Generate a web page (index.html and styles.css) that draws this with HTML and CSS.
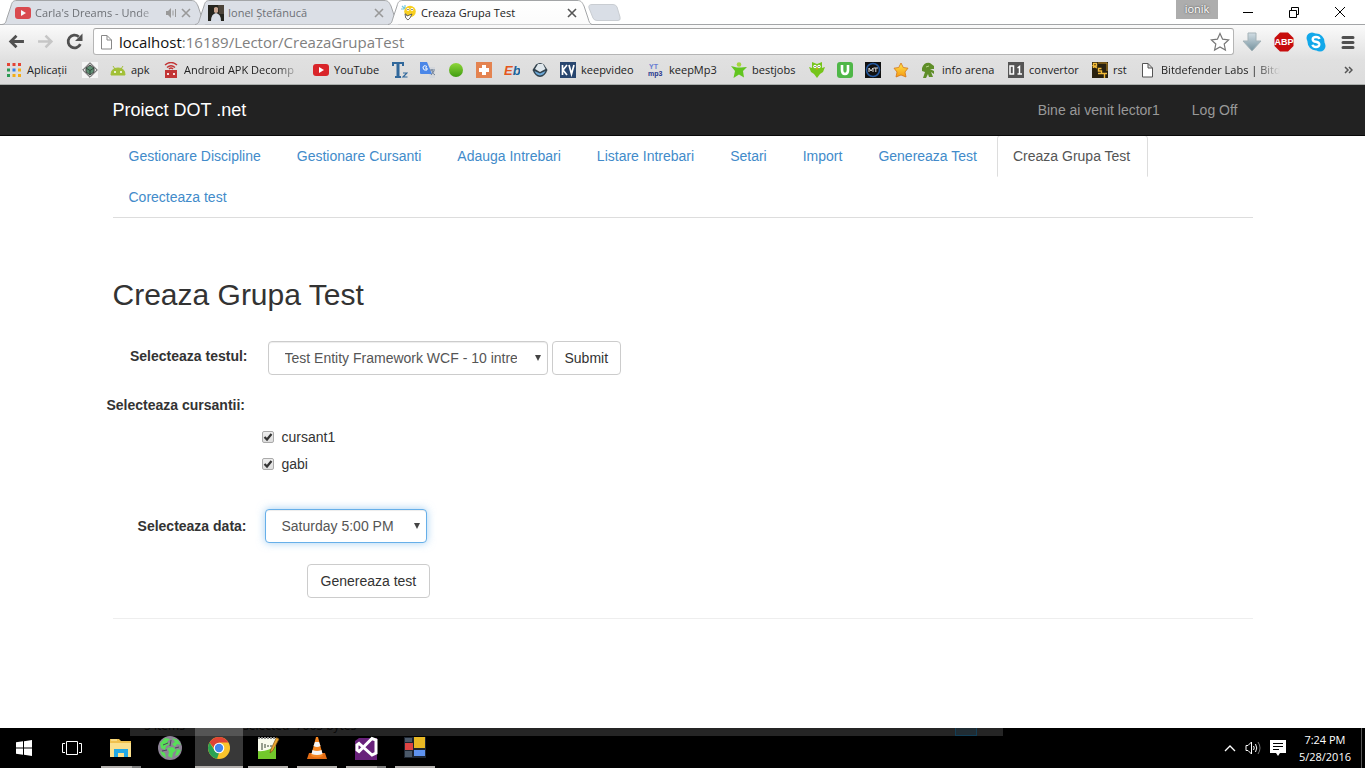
FILE: index.html
```html
<!DOCTYPE html>
<html lang="ro">
<head>
<meta charset="utf-8">
<title>Creaza Grupa Test</title>
<link rel="stylesheet" href="styles.css">
</head>
<body>
<svg class="defs" aria-hidden="true">
  <defs>
    <linearGradient id="activeFill" x1="0" y1="0" x2="0" y2="1"><stop offset="0" stop-color="#fff"/><stop offset="1" stop-color="#fbfbfb"/></linearGradient>
    <linearGradient id="gloss" x1="0" y1="0" x2="0" y2="1"><stop offset="0" stop-color="#d1dde4"/><stop offset="1" stop-color="#74919d"/></linearGradient>
    <linearGradient id="lime" x1="0" y1="0" x2="0" y2="1"><stop offset="0" stop-color="#8fd63a"/><stop offset="1" stop-color="#3f9c10"/></linearGradient>
    <linearGradient id="gold" x1="0" y1="0" x2="0" y2="1"><stop offset="0" stop-color="#ffe54a"/><stop offset="1" stop-color="#f59a12"/></linearGradient>
    <symbol id="tab" viewBox="0 0 204 25"><path d="M0 24.500C4 24 4 21 5 18L9 6C10 2 11 .5 15 .5H189C193 .5 194 2 196 6L200 18C201 22 202 24 204 24.500" stroke="#a3a5a7"/></symbol>
    <symbol id="close" viewBox="0 0 10 10"><path d="M1 1L9 9M9 1L1 9" stroke="currentColor" stroke-width="1.600"/></symbol>
    <symbol id="yt" viewBox="0 0 16 16"><rect y="2" width="16" height="12" rx="3" fill="#d9252a"/><path d="M6 5L11 8L6 11Z" fill="#fff"/></symbol>
    <symbol id="doc" viewBox="0 0 16 16"><path d="M2.500 1.500H8L12.500 6V15H2.500ZM8 1.500V6H12.500" fill="#fff" stroke="currentColor"/></symbol>
  </defs>
</svg>

<header class="browser">
  <div class="tabstrip">
    <div class="tab">
      <svg class="tab-shape" fill="#dbdfe6"><use href="#tab"/></svg>
      <svg class="ico faded"><use href="#yt"/></svg>
      <span class="tab-title fade">Carla's Dreams - Unde</span>
      <svg class="speaker" viewBox="0 0 12 12" fill="#999" stroke="#999"><path d="M1 4H3L6 1V11L3 8H1Z" stroke="none"/><path d="M8 3.500V8.500M10.500 2V10" fill="none"/></svg>
      <button class="tab-close" aria-label="Close tab"><svg viewBox="0 0 10 10"><use href="#close"/></svg></button>
    </div>
    <div class="tab">
      <svg class="tab-shape" fill="#dbdfe6"><use href="#tab"/></svg>
      <svg class="ico" viewBox="0 0 16 16"><path fill="#25251f" d="M0 0H16V16H0Z"/><path fill="#4c443a" d="M10 0H16V9H11Z"/><path fill="#c9a692" d="M6 3Q8 1 10 3V7Q8 9 6 7Z"/><path fill="#d7dde7" d="M3 16Q3 9 8 8Q13 9 13 16Z"/></svg>
      <span class="tab-title">Ionel Ştefănucă</span>
      <button class="tab-close" aria-label="Close tab"><svg viewBox="0 0 10 10"><use href="#close"/></svg></button>
    </div>
    <div class="tab active">
      <svg class="tab-shape" fill="url(#activeFill)"><use href="#tab"/></svg>
      <svg class="ico" viewBox="0 0 16 16"><path d="M1 1L4 4M4 0V3M0 4H3" stroke="#74c8df" stroke-width="1.200"/><circle cx="9" cy="6.500" r="5.800" fill="#f8cf20"/><circle cx="7" cy="4.500" r="1.400" fill="#fff"/><circle cx="11" cy="4.500" r="1.400" fill="#fff"/><path d="M6.500 4.500h1M10.500 4.500h1" stroke="#222"/><path d="M4 9Q5 8 6 11L11 9L9 13L7 15Q4 14 4 9Z" fill="#fff" stroke="#444" stroke-width=".8"/></svg>
      <span class="tab-title">Creaza Grupa Test</span>
      <button class="tab-close" aria-label="Close tab"><svg viewBox="0 0 10 10"><use href="#close"/></svg></button>
    </div>
    <button class="new-tab" aria-label="New tab"><svg viewBox="0 0 34 17"><path d="M4 .5H25Q28 .5 29 3L32 13Q33 16.500 30 16.500H9Q6 16.500 5 14L1 4Q0 .5 4 .5Z" fill="#d9dee6" stroke="#c9cdd2"/></svg></button>
    <span class="user">ionik</span>
    <div class="window-controls">
      <button aria-label="Minimize"><svg viewBox="0 0 12 12"><path d="M1 6.500H11" /></svg></button>
      <button aria-label="Restore"><svg viewBox="0 0 12 12"><path d="M1.500 4.500H8.500V11.500H1.500ZM3.500 4V1.500H10.500V8.500H9"/></svg></button>
      <button aria-label="Close"><svg viewBox="0 0 12 12"><path d="M1 1L11 11M11 1L1 11"/></svg></button>
    </div>
  </div>

  <div class="toolbar">
    <button class="tool" aria-label="Back"><svg viewBox="0 0 16 16"><path d="M15 8H3M8 2.500L2.500 8L8 13.500" fill="none" stroke="#505050" stroke-width="2.600"/></svg></button>
    <button class="tool" aria-label="Forward"><svg viewBox="0 0 16 16"><path d="M1 8H13M8 2.500L13.500 8L8 13.500" fill="none" stroke="#c6c6c6" stroke-width="2.400"/></svg></button>
    <button class="tool" aria-label="Reload"><svg viewBox="0 0 16 16"><path d="M13.500 10.500A6 6 0 1 1 12 3.500" fill="none" stroke="#505050" stroke-width="2.600"/><path d="M15.500 .5V7.500H8.500Z" fill="#505050"/></svg></button>
    <div class="omnibox">
      <svg class="ico doc"><use href="#doc"/></svg>
      <span class="url"><b>localhost</b>:16189/Lector/CreazaGrupaTest</span>
      <button class="star" aria-label="Bookmark"><svg viewBox="0 0 20 20"><path d="M10 1.500L12.600 7.200L18.600 7.900L14.200 12L15.400 18L10 15L4.600 18L5.800 12L1.400 7.900L7.400 7.200Z" fill="#fff" stroke="#777" stroke-width="1.200"/></svg></button>
    </div>
    <div class="extensions">
      <button class="ext" aria-label="Downloads"><svg viewBox="0 0 20 20"><path d="M6 1H14V9H19L10 19L1 9H6Z" fill="url(#gloss)" stroke="#a5b3b8"/></svg></button>
      <button class="ext" aria-label="Adblock"><svg viewBox="0 0 20 20"><path d="M6 .5H14L19.500 6V14L14 19.500H6L.5 14V6Z" fill="#c70d0d"/><text x="10" y="13" text-anchor="middle" class="glyph abp">ABP</text></svg></button>
      <button class="ext" aria-label="Skype"><svg viewBox="0 0 20 20"><circle cx="10" cy="10" r="8.500" fill="#12a8ea"/><circle cx="6" cy="6" r="5.500" fill="#12a8ea"/><circle cx="14" cy="14" r="5.500" fill="#12a8ea"/><path d="M13.500 7Q13 5 10 5Q6.700 5 6.700 7.300Q7 9.500 10 9.800Q13.500 10.500 13.300 12.700Q13 15 10 15Q7 15 6.500 12.800" fill="none" stroke="#fff" stroke-width="2.400"/></svg></button>
      <button class="ext" aria-label="Menu"><svg viewBox="0 0 20 20"><path d="M5 5.500H15M5 10.500H15M5 15.500H15" stroke="#505050" stroke-width="3" stroke-linecap="round"/></svg></button>
    </div>
  </div>

  <nav class="bookmarks" aria-label="Bookmarks">
    <a href="#"><svg class="ico" viewBox="0 0 16 16"><path d="M1 1h3v3H1zM6.500 1h3v3h-3zM12 1h3v3h-3z" fill="#e44435"/><path d="M1 6.500h3v3H1zM1 12h3v3H1z" fill="#2c9b54"/><path d="M6.500 6.500h3v3h-3z" fill="#367fe8"/><path d="M12 6.500h3v3h-3zM6.500 12h3v3h-3zM12 12h3v3h-3z" fill="#f4ad16"/></svg><span>Aplicații</span></a>
    <a href="#" aria-label="Decompiler"><svg class="ico" viewBox="0 0 16 16"><path d="M0 0H16V16H0Z" fill="#f5f5f5"/><path d="M8 .7L15.300 8L8 15.300L.7 8Z" fill="#ddd" stroke="#555"/><path d="M8 3L12 6V10L8 13L4 10V6Z" fill="#5f8f73" stroke="#444"/><path d="M4 6L8 8.500L12 6M8 8.500V13" fill="none" stroke="#2f4a3a"/></svg></a>
    <a href="#"><svg class="ico" viewBox="0 0 16 16"><path d="M1 13Q1 6 8 6Q15 6 15 13ZM3 4L5 7M13 4L11 7" fill="#a2c037" stroke="#a2c037"/><circle cx="5" cy="10" r="1" fill="#fff"/><circle cx="11" cy="10" r="1" fill="#fff"/></svg><span>apk</span></a>
    <a href="#"><svg class="ico" viewBox="0 0 16 16"><path d="M2 8H14V16H2Z" fill="#c23434"/><path d="M2 3Q8 -2 14 3M4 5.500Q8 2 12 5.500M6 7Q8 5 10 7" fill="none" stroke="#c23434" stroke-width="1.500"/><path d="M4 11h2v2H4zM10 11h2v2h-2z" fill="#f8dede"/></svg><span class="fade">Android APK Decomp</span></a>
    <a href="#"><svg class="ico"><use href="#yt"/></svg><span>YouTube</span></a>
    <a href="#" aria-label="Tz"><svg class="ico" viewBox="0 0 16 16"><path d="M0 0H12V4H10V2H7.500V14H9V16H3V14H4.500V2H2V4H0Z" fill="#31689b"/><path d="M11 11H15L11 15H15.500" fill="none" stroke="#31689b" stroke-width="1.200"/></svg></a>
    <a href="#" aria-label="Translate"><svg class="ico" viewBox="0 0 16 16"><path d="M7 5H15V16H10Z" fill="#d4d7dc"/><path d="M0 0H7L12 12H1Q0 12 0 11Z" fill="#4b87e8"/><path d="M7 4.500Q3 2.500 3 6Q3.500 9 7 8V6H5" fill="none" stroke="#fff"/><path d="M10 8H15M12 7V9Q13 12 15 13M14 9L11 13" fill="none" stroke="#718095"/></svg></a>
    <a href="#" aria-label="Green"><svg class="ico" viewBox="0 0 16 16"><circle cx="8" cy="8" r="7" fill="url(#lime)"/></svg></a>
    <a href="#" aria-label="Health"><svg class="ico" viewBox="0 0 16 16"><path d="M0 0H16V16H0Z" fill="#e48350"/><path d="M6 3H10V6H13V10H10V13H6V10H3V6H6Z" fill="#fff"/></svg></a>
    <a href="#" aria-label="Eb"><svg class="ico" viewBox="0 0 16 16"><text x="0" y="13" class="glyph eb" fill="#e5571d">E<tspan fill="#19639b">b</tspan></text></svg></a>
    <a href="#" aria-label="Gem"><svg class="ico" viewBox="0 0 16 16"><path d="M.5 8L4 2.500Q8 -.5 12 2.500L15.500 8Q13 14.500 8 15Q3 14.500 .5 8Z" fill="#31414c"/><path d="M3 7L6 2H11L13.500 7L8 10Z" fill="#dfe7ec"/><path d="M2.500 9L8 11.500L13.500 9Q12 13 8 13.500Q4 13 2.500 9Z" fill="#6da8d7"/></svg></a>
    <a href="#"><svg class="ico" viewBox="0 0 16 16"><path d="M0 0H16V16H0Z" fill="#28466f"/><path d="M2.500 3V13M7 3L3 8L7 13M9 3L11.500 12L14 3" fill="none" stroke="#fff" stroke-width="1.700"/></svg><span>keepvideo</span></a>
    <a href="#"><svg class="ico" viewBox="0 0 16 16"><text x="1" y="7" class="glyph ytmp" fill="#667bd2">YT</text><text x="0" y="14" class="glyph ytmp" fill="#27378c">mp3</text></svg><span>keepMp3</span></a>
    <a href="#"><svg class="ico" viewBox="0 0 16 16"><circle cx="8" cy="2.500" r="2.300" fill="#a4d53e"/><path d="M0 4L6 5.500H10L16 5L12 9L13 15.500L8 12.500L2.500 16L4 9Z" fill="#62c51f"/></svg><span>bestjobs</span></a>
    <a href="#" aria-label="Owl"><svg class="ico" viewBox="0 0 16 16"><path d="M3 0L8 2L13 0V6L16 5L14 10L11 12L8 16L5 12L2 10L0 5L3 6Z" fill="#76c51b"/><circle cx="6" cy="4.500" r="1.700" fill="#fff"/><circle cx="10" cy="4.500" r="1.700" fill="#fff"/><path d="M5.500 4.500h1M9.500 4.500h1" stroke="#333"/><path d="M7 6H9L8 8Z" fill="#f69717"/></svg></a>
    <a href="#" aria-label="Udemy"><svg class="ico" viewBox="0 0 16 16"><rect width="16" height="16" rx="3" fill="#4fb748"/><path d="M5 3V8Q5 12 8 12Q11 12 11 8V3" fill="none" stroke="#fff" stroke-width="2.600"/></svg></a>
    <a href="#" aria-label="MT"><svg class="ico" viewBox="0 0 16 16"><path d="M0 0H16V16H0Z" fill="#111"/><circle cx="8" cy="8" r="6.500" fill="none" stroke="#2459a0" stroke-width="1.500"/><path d="M4 10V6L6 9L8 6V10M8.500 6H13M10.800 6V10" fill="none" stroke="#ddd"/></svg></a>
    <a href="#" aria-label="Favourites"><svg class="ico" viewBox="0 0 16 16"><path d="M8 1L10.300 5.500L15 6.200L12 10L13 15L8 13L3 15L4 10L1 6.200L5.700 5.500Z" fill="url(#gold)" stroke="#d57618" stroke-width=".8"/></svg></a>
    <a href="#"><svg class="ico" viewBox="0 0 16 16"><path d="M1 6Q3 0 9 1L13 4V7H9L13 9V12L10 10L12 15H8L7 12L5 16H2L4 10L1 9Z" fill="#5f8e29"/><path d="M5 5L8 4" stroke="#b8d58a"/></svg><span>info arena</span></a>
    <a href="#"><svg class="ico" viewBox="0 0 16 16"><path d="M0 0H16V16H0Z" fill="#555"/><rect x="2" y="4" width="3.500" height="8" fill="none" stroke="#fff" stroke-width="1.500"/><path d="M9.500 6L11.500 4.500V12M9.500 12H14" fill="none" stroke="#fff" stroke-width="1.500"/></svg><span>convertor</span></a>
    <a href="#"><svg class="ico" viewBox="0 0 16 16"><path d="M0 0H16V16H0Z" fill="#29210f"/><path d="M6 1H15V9" fill="none" stroke="#c38d22"/><path d="M1.500 6V1.500H4.500V4H1.500L5 6M9.500 6.500H6.500V9H9.500V11.500H6M10 11.500H15M12.500 11.500V16" fill="none" stroke="#f3bb38" stroke-width="1.400"/></svg><span>rst</span></a>
    <a class="last" href="#"><svg class="ico doc"><use href="#doc"/></svg><span class="fade">Bitdefender Labs | Bitd</span></a>
    <button class="more" aria-label="More bookmarks"><svg viewBox="0 0 9 8"><path d="M1 1L4 4L1 7M5 1L8 4L5 7" fill="none" stroke="#555" stroke-width="1.500"/></svg></button>
  </nav>
</header>

<nav class="navbar">
  <div class="container navbar-row">
    <a class="brand" href="#">Proiect DOT .net</a>
    <div class="account"><a href="#">Bine ai venit lector1</a><a href="#">Log Off</a></div>
  </div>
</nav>

<main class="container content">
  <ul class="nav-tabs">
    <li><a href="#">Gestionare Discipline</a></li>
    <li><a href="#">Gestionare Cursanti</a></li>
    <li><a href="#">Adauga Intrebari</a></li>
    <li><a href="#">Listare Intrebari</a></li>
    <li><a href="#">Setari</a></li>
    <li><a href="#">Import</a></li>
    <li><a href="#">Genereaza Test</a></li>
    <li><a class="current" href="#" aria-current="page">Creaza Grupa Test</a></li>
    <li><a href="#">Corecteaza test</a></li>
  </ul>

  <h2>Creaza Grupa Test</h2>

  <form class="form">
    <div class="row test-row">
      <label for="test">Selecteaza testul:</label>
      <div class="controls">
        <span class="select-wrap wide"><select id="test"><option>Test Entity Framework WCF - 10 intrebari</option></select></span>
        <button class="btn" type="button">Submit</button>
      </div>
    </div>
    <fieldset>
      <legend>Selecteaza cursantii:</legend>
      <div class="checks">
        <label><input type="checkbox" checked><span>cursant1</span></label>
        <label><input type="checkbox" checked><span>gabi</span></label>
      </div>
    </fieldset>
    <div class="row date-row">
      <label for="date">Selecteaza data:</label>
      <span class="select-wrap date"><select id="date" class="focused"><option>Saturday 5:00 PM</option></select></span>
    </div>
    <div class="actions"><button class="btn" type="button">Genereaza test</button></div>
  </form>
  <hr>
</main>

<footer class="taskbar">
  <div class="behind" aria-hidden="true"><span>5 items</span><span>1 item selected&nbsp; 7065 bytes</span><i></i></div>
  <button class="task start" aria-label="Start"><svg class="small" viewBox="0 0 16 16" fill="#fff"><path d="M0 2.300L7 1.300V7.500H0ZM8 1.200L16 0V7.500H8ZM0 8.500H7V14.700L0 13.700ZM8 8.500H16V16L8 14.800Z"/></svg></button>
  <button class="task" aria-label="Task view"><svg class="view" viewBox="0 0 20 14" fill="none" stroke="#fff"><path d="M4.500 .5H15.500V13.500H4.500ZM3 2.500H.5V11.500H3M17 2.500H19.500V11.500H17"/></svg></button>
  <button class="task open multi" aria-label="File Explorer"><svg viewBox="0 0 24 24"><path d="M1 3H10L12 5H22V21H1Z" fill="#f0c14e"/><path d="M1 7H22V21H1Z" fill="#fbe08c"/><path d="M5 13H19V21H15V17H9V21H5Z" fill="#22a8e4"/><path d="M2 4H8" stroke="#fff1b5"/></svg></button>
  <button class="task" aria-label="Globe"><svg viewBox="0 0 24 24"><circle cx="12" cy="12" r="12" fill="#8d8396"/><path d="M2 7L7 2L12 3L9 6L12 8L8 10L7 14L3 12ZM14 2L20 4L23 9L19 8L17 11L14 8L17 6ZM9 12L15 11L18 14L15 17L14 22L10 20L11 16ZM19 13L23 14L20 19L17 20ZM2 15L7 17L8 22L4 19Z" fill="#57df58"/><path d="M5 9L10 7M13 4L12 10M4 15L9 14M17 12L21 11" stroke="#4d435a"/></svg></button>
  <button class="task open current-task" aria-label="Chrome"><svg viewBox="0 0 24 24"><circle cx="12" cy="12" r="11" fill="#fac42b"/><path d="M2.500 6.500A11 11 0 0 1 21.500 6.500H12L7 12Z" fill="#df4335"/><path d="M2.500 6.500L8 15L12 17L10 22.800A11 11 0 0 1 2.500 6.500Z" fill="#2aa253"/><circle cx="12" cy="12" r="5.300" fill="#fff"/><circle cx="12" cy="12" r="4.200" fill="#4386ed"/></svg></button>
  <button class="task open" aria-label="Notepad++"><svg viewBox="0 0 24 24"><path d="M2 2H20V23H2Z" fill="#f7faed"/><path d="M2 15Q11 16 20 10V23H2Z" fill="#72c82b"/><path d="M2 2H20" stroke="#888" stroke-width="2" stroke-dasharray="2 1"/><path d="M6 7V14M9 8V12M11 10H13M14 10H16" stroke="#344230"/><path d="M14 17L15 13L20.500 1.500L23 3L17 14.500Z" fill="#eba42d" stroke="#765119" stroke-width=".7"/></svg></button>
  <button class="task open" aria-label="VLC"><svg viewBox="0 0 24 24"><path d="M4 17H20L22 23H2Z" fill="#e16c15"/><path d="M11 1H13L18 20Q12 23 6 20Z" fill="#f58520"/><path d="M10 6H14L15.500 10Q12 12 8.500 10ZM7.500 14Q12 16 16.500 14L17.500 18Q12 20 6.500 18Z" fill="#f4f4f4"/></svg></button>
  <button class="task open multi" aria-label="Visual Studio"><svg viewBox="0 0 24 24"><path d="M1 5L5 2H23V24H1Z" fill="#68217a"/><path d="M3 9L5 7.500L18 19L22 17V4L18 2.500L5 15.500L3 14Z" fill="none" stroke="#fff" stroke-width="3"/></svg></button>
  <button class="task open" aria-label="Application"><svg viewBox="0 0 24 24"><path d="M1 1H23V22H1Z" fill="#1d2531"/><path d="M11 1H22V12H11Z" fill="#e8b824"/><path d="M2 7H10V14H2Z" fill="#dd4544"/><path d="M11 14H22V20H11Z" fill="#5e92ef"/><path d="M2 2H9V6H2ZM2 15H9V21H2Z" fill="#4b5969"/></svg></button>
  <div class="tray">
    <svg class="chevron" viewBox="0 0 12 8"><path d="M1 7L6 2L11 7" fill="none" stroke="#fff" stroke-width="1.300"/></svg>
    <svg class="small" viewBox="0 0 16 16" fill="none" stroke="#fff"><path d="M1 5.500H3L6.500 2V14L3 10.500H1ZM8.500 6Q10 8 8.500 10M10.500 4Q13 8 10.500 12"/><path d="M13 2Q17 8 13 14" stroke="#777"/></svg>
    <svg class="small" viewBox="0 0 16 16"><path d="M0 0H16V13H10L8 16L6 13H0Z" fill="#fff"/><path d="M3 3.500H13M3 6.500H13M3 9.500H9" stroke="#000"/></svg>
    <div class="clock"><span>7:24 PM</span><span>5/28/2016</span></div>
  </div>
</footer>
</body>
</html>
```

FILE: styles.css
```css
* { box-sizing: border-box; }

body {
  margin: 0;
  min-height: 100vh;
  display: flex;
  flex-direction: column;
  overflow-x: hidden;
  background: #fff;
  color: #333;
  font: 14px/20px "Liberation Sans", Arial, sans-serif;
}

a { text-decoration: none; }
button { margin: 0; padding: 0; border: 0; background: none; font: inherit; color: inherit; }
svg { display: block; flex: none; }
.defs { position: absolute; width: 0; height: 0; }

/* Browser window */
.browser {
  border-bottom: 1px solid #a9adab;
  background: linear-gradient(#fbfbfb 24px, #e0e0e0 60px, #dcdcdc);
  color: #222;
  font: 11px/16px "Open Sans", "Noto Sans", sans-serif;
}
.ico { width: 16px; height: 16px; }
.faded { opacity: .8; }
.doc { color: #888; }
.bookmarks .doc { color: #555; }
.fade { mask-image: linear-gradient(to left, transparent, #000 24px); }

.tabstrip { display: flex; height: 25px; padding-left: 2px; background: #fff; border-bottom: 1px solid #a3a5a7; }
.tab {
  position: relative;
  z-index: 0;
  display: flex;
  align-items: center;
  gap: 4px;
  width: 204px;
  height: 25px;
  margin-right: -11px;
  padding: 1px 15px 0 13px;
  color: #6d7075;
}
.tab.active { color: #222; z-index: 1; }
.tab-shape { position: absolute; left: 0; top: 0; width: 204px; height: 25px; z-index: -1; }
.tab-title { flex: 1; min-width: 0; overflow: hidden; white-space: nowrap; }
.speaker { width: 12px; height: 12px; }
.tab-close { color: #999; }
.active .tab-close { color: #555; }
.tab-close svg { width: 10px; height: 10px; }
.new-tab { margin: 4px 0 0 7px; height: 17px; }
.new-tab svg { width: 34px; height: 17px; }
.user {
  height: 19px;
  width: 42px;
  margin: 0 22px 0 auto;
  background: #adadad;
  color: #fff;
  line-height: 18px;
  text-align: center;
  text-shadow: 0 0 2px #333;
}
.window-controls { display: flex; align-items: center; gap: 34px; padding: 0 19px 0 2px; }
.window-controls svg { width: 12px; height: 12px; fill: none; stroke: #000; }

.toolbar { display: flex; align-items: center; height: 32px; padding: 3px 7px 2px 8px; }
.tool { width: 29px; }
.tool svg { width: 17px; height: 17px; }
.omnibox {
  flex: 1;
  display: flex;
  align-items: center;
  gap: 4px;
  height: 27px;
  margin-right: 8px;
  margin-left: -2px;
  padding: 0 3px 0 5px;
  border: 1px solid #b5b5b5;
  border-top-color: #a3a3a3;
  border-radius: 3px;
  background: #fff;
  color: #808080;
  font-size: 15px;
}
.url { flex: 1; }
.url b { font-weight: 400; color: #111; }
.star svg, .ext svg { width: 20px; height: 20px; }
.extensions { display: flex; gap: 12px; }

.bookmarks {
  display: grid;
  grid-template-columns: 76px 28px 53px 150px 79px 28px 28px 28px 28px 28px 28px 88px 83px 78px 28px 28px 28px 28px 87px 84px 48px 140px 1fr;
  align-items: center;
  height: 27px;
  padding: 0 12px 1px 6px;
}
.bookmarks a { display: flex; align-items: center; gap: 5px; padding-right: 12px; color: #222; white-space: nowrap; }
.bookmarks a.last { padding-right: 0; }
.bookmarks a .fade { flex: 1; min-width: 0; overflow: hidden; }
.more { justify-self: end; }
.more svg { width: 9px; height: 8px; }
.glyph { font-family: "Liberation Sans", sans-serif; font-weight: 700; }
.abp { font-size: 9px; fill: #fff; }
.eb { font-size: 13px; font-style: italic; }
.ytmp { font-size: 7px; }

/* Site */
.container { width: 100%; max-width: 1170px; margin: 0 auto; padding: 0 15px; }
.navbar { background: #222; border-bottom: 1px solid #080808; position: relative; z-index: 1; }
.navbar-row { display: flex; justify-content: space-between; align-items: center; height: 50px; }
.brand { color: #fff; font-size: 18px; }
.account { display: flex; gap: 32px; padding-right: 15px; }
.account a { color: #999; }

.content { flex: 1; }
.nav-tabs {
  display: flex;
  flex-wrap: wrap;
  list-style: none;
  margin: -1px 0 0;
  padding: 0;
  border-bottom: 1px solid #ddd;
}
.nav-tabs li { margin-bottom: -1px; }
.nav-tabs a {
  display: block;
  margin-right: 2px;
  padding: 10px 17px 10px 15px;
  border: 1px solid transparent;
  border-radius: 4px 4px 0 0;
  color: #428bca;
}
.nav-tabs .current { color: #555; border-color: #ddd #ddd transparent; }

h2 { margin: 60px 0 30px; font-size: 30px; line-height: 33px; font-weight: 500; }

.row { display: flex; }
.row > label, legend { font-weight: 700; }
.row > label { width: 134px; padding-top: 5px; text-align: right; }
.test-row > label { width: 135px; }
.controls { display: flex; gap: 4px; margin-left: 20px; }
.select-wrap { position: relative; color: #555; }
.select-wrap::after {
  content: "";
  position: absolute;
  right: 7px;
  top: 14px;
  border: 3px solid transparent;
  border-top: 6px solid #444;
  border-bottom: 0;
}
select {
  appearance: none;
  width: 100%;
  height: 34px;
  padding: 6px 30px 6px 16px;
  border: 1px solid #ccc;
  border-radius: 4px;
  background: #fff;
  box-shadow: inset 0 1px 1px rgba(0, 0, 0, .075);
  color: #555;
  font: inherit;
}
.wide { width: 280px; }
.date { width: 162px; margin-left: 18px; }
.focused { border-color: #66afe9; box-shadow: inset 0 1px 1px rgba(0, 0, 0, .075), 0 0 8px rgba(102, 175, 233, .6); }
.btn {
  height: 34px;
  padding: 0 12px;
  border: 1px solid #ccc;
  border-radius: 4px;
  background: #fff;
  color: #333;
}
.actions .btn { padding: 0 13px; }
fieldset { margin: 20px 0 0 -15px; padding: 0; border: 0; }
legend { margin-left: 9px; padding: 0; white-space: nowrap; }
.checks { display: flex; flex-direction: column; gap: 7px; padding: 12px 0 0 164px; }
.checks label { display: flex; align-items: center; gap: 8px; }
input[type="checkbox"] {
  appearance: none;
  width: 12px;
  height: 12px;
  margin: 0;
  border: 1px solid #aaa;
  border-radius: 2px;
  background: url("data:image/svg+xml,%3Csvg xmlns='http://www.w3.org/2000/svg' viewBox='0 0 10 10'%3E%3Cpath d='M1.500 5L4 7.500L8.500 2' fill='none' stroke='%23333' stroke-width='2.200'/%3E%3C/svg%3E"), linear-gradient(#eee, #ddd);
}
.date-row { margin-top: 35px; }
.date-row > label { padding-top: 7px; }
.actions { margin: 21px 0 0 194px; }
hr { margin: 20px 0; border: 0; border-top: 1px solid #eee; }

/* Desktop taskbar */
.taskbar { position: relative; z-index: 0; display: flex; gap: 1px; height: 40px; background: #000; }
.behind {
  position: absolute;
  z-index: -1;
  left: 130px;
  right: 362px;
  top: 0;
  height: 8px;
  display: flex;
  gap: 20px;
  padding: 0 26px 0 14px;
  overflow: hidden;
  background: #252525;
  color: #080808;
  font: 12px/1px "Open Sans", sans-serif;
  white-space: nowrap;
}
.behind span { margin-top: -3px; }
.behind i { width: 22px; height: 8px; margin-left: auto; border: 1px solid #123f58; border-top: 0; background: #202c33; }
.task { display: flex; align-items: center; justify-content: center; width: 48px; border: solid transparent; border-width: 2px 0; }
.start { width: 47px; }
.task svg { width: 24px; height: 24px; }
.task .small, .small { width: 16px; height: 16px; }
.task .view { width: 20px; height: 14px; }
.open { background: linear-gradient(#b4b1ae, #b4b1ae) 50% 100% / 40px 2px no-repeat border-box; }
.multi { background-image: linear-gradient(90deg, #b4b1ae 31px, #7c7c7c 31px); }
.current-task { background: linear-gradient(#555 8px, #383838 8px 38px, #b4b1ae 38px) border-box; }
.tray { display: flex; align-items: center; gap: 9px; margin: 0 3px 0 auto; padding-right: 10px; border-right: 1px solid #555; color: #fff; }
.chevron { width: 12px; height: 8px; }
.clock { display: flex; flex-direction: column; align-items: center; margin-left: 4px; font: 11px/17px "Open Sans", sans-serif; }
```
